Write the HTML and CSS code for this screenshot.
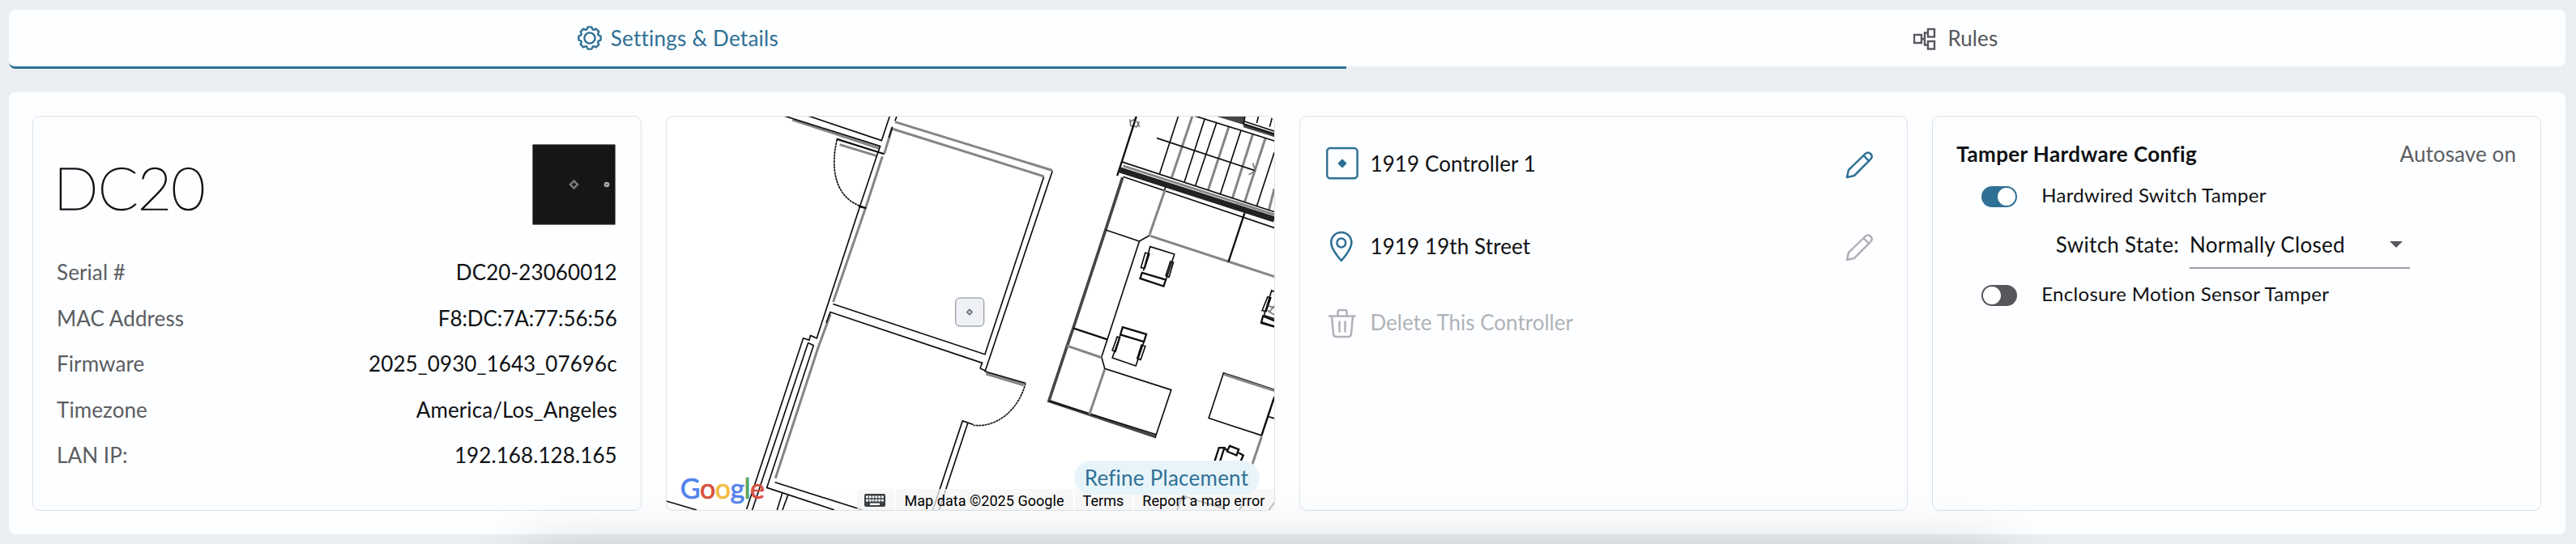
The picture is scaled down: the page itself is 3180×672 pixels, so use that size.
FILE: index.html
```html
<!DOCTYPE html>
<html lang="en">
<head>
    <meta charset="UTF-8">
    <meta name="viewport" content="width=device-width, initial-scale=1.0">
    <title>1919 Controller 1</title>
    <link rel="stylesheet" href="styles.css">
</head>
<body>
    <div class="tabs">
        <div class="tab active">
            <svg class="tab-icon" width="32" height="32" viewBox="-16 -16 32 32">
                <path d="M-2.4-13.6H2.4L3.6-10.7 5-10.1 7.9-11.3 11.3-7.9 10.1-5 10.7-3.6 13.6-2.4V2.4L10.7 3.6 10.1 5 11.3 7.9 7.9 11.3 5 10.1 3.6 10.7 2.4 13.6H-2.4L-3.6 10.7-5 10.1-7.9 11.3-11.3 7.9-10.1 5-10.7 3.6-13.6 2.4V-2.4L-10.7-3.6-10.1-5-11.3-7.9-7.9-11.3-5-10.1-3.6-10.7Z"/>
                <circle r="6.6"/>
            </svg>
            <span>Settings &amp; Details</span>
        </div>
        <div class="tab">
            <svg class="tab-icon rules-icon" width="28" height="28" viewBox="0 0 28 28">
                <rect x="1" y="9" width="9" height="10"/>
                <rect x="18" y="2" width="8" height="9.5"/>
                <rect x="18" y="17" width="8" height="9.5"/>
                <path d="M10 14h4M18 6.5h-4v15h4"/>
            </svg>
            <span>Rules</span>
        </div>
    </div>

    <div class="panel">
        <div class="card device">
            <div class="device-header">
                <h1>DC20</h1>
                <svg width="103" height="100" viewBox="0 0 103 100">
                    <rect x=".5" y=".5" width="102" height="99" rx="1" fill="#161616" stroke="#777"/>
                    <path d="M51.5 45.5l4.5 4.5-4.5 4.500-4.500-4.500z" fill="none" stroke="#77787a" stroke-width="2.600"/>
                    <circle cx="92" cy="50" r="3.300" fill="#aaa"/>
                    <circle cx="92" cy="50" r=".9" fill="#444"/>
                </svg>
            </div>
            <div class="detail"><span class="label">Serial #</span><span>DC20-23060012</span></div>
            <div class="detail"><span class="label">MAC Address</span><span class="mac">F8:DC:7A:77:56:56</span></div>
            <div class="detail"><span class="label">Firmware</span><span>2025_0930_1643_07696c</span></div>
            <div class="detail"><span class="label">Timezone</span><span>America/Los_Angeles</span></div>
            <div class="detail"><span class="label">LAN IP:</span><span>192.168.128.165</span></div>
        </div>

        <div class="card map">
            <svg class="floorplan" viewBox="39 42 2250 1461" preserveAspectRatio="none">
                <defs>
                    <filter id="soft" x="-5%" y="-5%" width="110%" height="110%"><feGaussianBlur stdDeviation="1.4"/></filter>
                </defs>
                <g filter="url(#soft)">
                    <!-- rooms -->
                    <path class="shade" d="M505 54L826 160M680 146L818 188M875 82L845 180M885 62L1468 242M876 88L1436 264M838 190L778 375L656 730M646 775L600 900L442 1385"/>
                    <path class="line" d="M470 38L830 152L820 180L755 375L595 865L572 855L567 872L545 865L335 1500M560 38L835 131L866 38"/>
                    <path class="line" d="M892 38L885 58M1468 244L1218 990M875 80L862 120M1436 266L1218 925L655 738M1200 977L1208 957L645 768L630 808M1200 977L1218 985"/>
                    <path class="line" d="M563 882L583 892L410 1420L660 1503M563 882L356 1503M440 1400L765 1503M468 1438L448 1503M488 1448L468 1503M38 1470L150 1503"/>
                    <path class="line" d="M1175 1186L1135 1172L1025 1503M1155 1178L1048 1503"/>
                    <!-- doors -->
                    <path class="line thick" d="M668 125L845 181M750 375L778 382"/>
                    <path class="line arc" d="M670 128C645 230 660 350 770 378"/>
                    <path class="shade thick" d="M1222 996L1362 1038"/>
                    <path class="line" d="M1218 988L1368 1032"/>
                    <path class="line arc" d="M1368 1032C1345 1130 1260 1200 1175 1188"/>
                </g>
                <g filter="url(#soft)" transform="translate(1140 0)">
                    <!-- stairs -->
                    <path class="line" d="M795 38L725 255M893 48L817 285M937 62L858 298M1027 92L950 330M1150 175L1085 375M1070 108L1045 190M1117 122L1100 180"/>
                    <path class="shade" d="M847 38L770 268M982 78L905 315M1070 108L995 345M1117 122L1040 360M1150 310L1130 390"/>
                    <path fill="#444" d="M925 38H1042L1036 72ZM1036 66L1150 102V118L1036 82Z"/>
                    <path class="line" d="M850 38L1150 132M1042 38L1036 70L1150 108M1092 38L1085 66M1142 45L1133 80M1040 60L1150 96"/>
                    <path class="line" d="M715 122L1080 243"/>
                    <path class="sketch" d="M1070 215L1080 243L1055 258M615 52L618 76L640 80M618 60L636 50M640 58L651 80M650 60L640 82"/>
                    <path class="line thick" d="M640 38L585 210L568 262"/>
                    <path class="shade" d="M590 225L1150 406"/>
                    <path class="line" d="M585 210L1150 396M590 265L1150 455"/>
                    <path class="band" d="M578 240L1150 424"/>
                    <!-- desks -->
                    <path class="wall" d="M588 268L525 463L405 828L382 895L315 1098L708 1230"/>
                    <path class="line" d="M525 463L650 505L532 868L510 935L522 978L768 1057L708 1236M650 505L688 483M740 322L748 302M315 1098L710 1222"/>
                    <path class="shade" d="M745 315L688 480M690 485L1150 636M382 893L510 937M522 980L465 1148"/>
                    <path class="line thick" d="M1040 400L980 582M405 828L532 870M1100 808L1150 822"/>
                    <path class="line" d="M1150 1056L962 994L907 1162L1103 1226L1150 1082M1125 1155L1150 1163"/>
                    <path class="shade" d="M965 1000L1150 1060M1103 1230L1068 1335"/>
                    <path class="line thick" d="M1148 1090L1103 1226"/>
                    <!-- chairs -->
                    <path class="line" d="M665 615L690 525L780 553L748 650M672 548L687 552L670 605L656 603ZM765 580L776 583L760 638L748 633Z"/>
                    <path class="line thick" d="M660 622L748 648L740 672L653 643Z"/>
                    <path class="line thick" d="M588 824L676 850L667 878L580 852Z"/>
                    <path class="line" d="M580 852L550 938L637 968L667 878M568 860L578 863L562 915L550 910ZM658 890L672 895L655 945L642 940Z"/>
                    <path class="line" d="M1150 692L1140 688L1112 780L1150 793M1125 712L1137 715L1120 765L1105 762Z"/>
                    <path class="line thick" d="M1150 800L1108 783L1102 806L1150 822"/>
                    <path class="sketch" d="M1128 745L1150 752M1130 770L1150 745M1125 762L1150 778"/>
                    <path class="line thick" d="M928 1325L945 1272L965 1272L948 1325M1018 1290L1035 1300L1022 1330M965 1275L975 1280"/>
                    <path class="line thick" d="M975 1285L985 1265L1018 1278L1010 1300Z"/>
                    <path class="line" d="M810 1450L790 1503M810 1450L970 1500M1035 1480L1020 1503M1150 1475L1130 1503"/>
                </g>
                <rect x="1109.5" y="715.5" width="105" height="105" rx="16" fill="#f0f1f6" stroke="#7a828c" stroke-width="3"/>
                <path d="M1161 759l9 9-9 9-9-9z" fill="none" stroke="#6f7a80" stroke-width="6" stroke-linejoin="round"/>
            </svg>
            <div class="google"><span class="g-blue">G</span><span class="g-red">o</span><span class="g-yellow">o</span><span class="g-blue">g</span><span class="g-green">l</span><span class="g-red">e</span></div>
            <div class="attribution">
                <div class="chip keyboard">
                    <svg width="26" height="16" viewBox="0 0 26 16">
                        <rect width="26" height="16" rx="2" fill="#3c4043"/>
                        <path d="M2 3.800h22M2 8.200h22" stroke="#fff" stroke-width="2.800" stroke-dasharray="2.800 1"/>
                        <path d="M7 12.800h12" stroke="#fff" stroke-width="2.400"/>
                    </svg>
                </div>
                <div class="chip">Map data ©2025 Google</div>
                <div class="chip">Terms</div>
                <div class="chip">Report a map error</div>
            </div>
            <div class="refine">Refine Placement</div>
        </div>

        <div class="card actions">
            <div class="action">
                <svg class="icon" width="40" height="42" viewBox="0 0 40 42">
                    <rect x="1.200" y="2" width="37.400" height="37.200" rx="4"/>
                    <path class="dot" d="M20 16.800l4 4-4 4-4-4z"/>
                </svg>
                <span>1919 Controller 1</span>
                <svg class="icon pencil" width="34" height="34" viewBox="0 0 34 34">
                    <path d="M2 32L4 23 24.500 3.200Q28-.2 31.200 3T31 9.800L11 30ZM22.500 5.200L29 11.600"/>
                </svg>
            </div>
            <div class="action">
                <svg class="icon" width="40" height="42" viewBox="0 0 40 42">
                    <path d="M18.800 39C14 33.500 6.200 24.500 6.200 16.500a12.600 12.600 0 0 1 25.200 0C31.400 24.500 23.600 33.500 18.800 39Z"/>
                    <circle cx="18.800" cy="17" r="5.400"/>
                </svg>
                <span>1919 19th Street</span>
                <svg class="icon pencil muted" width="34" height="34" viewBox="0 0 34 34">
                    <path d="M2 32L4 23 24.500 3.200Q28-.2 31.200 3T31 9.800L11 30ZM22.500 5.200L29 11.600"/>
                </svg>
            </div>
            <div class="action muted">
                <svg class="icon" width="40" height="42" viewBox="0 0 40 42">
                    <path d="M4 13.500H35.500M7 14L9 35.500Q9.300 39 12.500 39H27.500Q30.700 39 31 35.500L33 14M14.500 13V8.500Q14.500 6 17 6H23Q25.500 6 25.500 8.500V13M16.500 20.500V32.500M23.500 20.500V32.500"/>
                </svg>
                <span>Delete This Controller</span>
            </div>
        </div>

        <div class="card tamper">
            <div class="tamper-header">
                <h2>Tamper Hardware Config</h2>
                <span class="label">Autosave on</span>
            </div>
            <div class="switch-row">
                <div class="toggle on"></div>
                <span>Hardwired Switch Tamper</span>
            </div>
            <div class="state-row">
                <span>Switch State:</span>
                <div class="select">Normally Closed</div>
            </div>
            <div class="switch-row">
                <div class="toggle"></div>
                <span>Enclosure Motion Sensor Tamper</span>
            </div>
        </div>
    </div>
    <div class="drawer-shadow"></div>
</body>
</html>
```
FILE: styles.css
```css
* {
    box-sizing: border-box;
}
body {
    font-family: Lato, sans-serif;
    font-size: 26px;
    line-height: 32px;
    letter-spacing: 0.1px;
    margin: 0;
    padding: 12px 13px 0 11px;
    height: 672px;
    overflow: hidden;
    background-color: #ebeff2;
    color: #101114;
}
h1, h2 {
    margin: 0;
}
svg {
    flex: none;
}
.tabs {
    display: flex;
    height: 73px;
}
.tab {
    flex: 1 1 auto;
    display: flex;
    align-items: center;
    justify-content: center;
    gap: 10px;
    height: 70px;
    background-color: #fdfeff;
    color: #55575c;
    border-radius: 0 8px 8px 0;
}
.tab.active {
    height: 73px;
    color: #2f7095;
    border-bottom: 3px solid #2f7095;
    border-radius: 8px 0 0 8px;
    letter-spacing: 0.25px;
}
.tab-icon {
    fill: none;
    stroke: currentColor;
    stroke-width: 2.4;
    stroke-linejoin: round;
}
.rules-icon {
    margin: 2px 4px 0 0;
    stroke-linejoin: miter;
}
.panel {
    display: grid;
    grid-template-columns: repeat(4, 1fr);
    gap: 30px;
    height: 546px;
    margin-top: 29px;
    padding: 29px 30px 29px 29px;
    border-radius: 8px;
    background-color: #fdfeff;
}
.card {
    border: 1px solid #dde1e6;
    border-radius: 9px;
    padding: 0 29px;
}
.label {
    color: #5b5d62;
}

/* device details */
.device-header {
    display: flex;
    justify-content: space-between;
    height: 100px;
    margin: 34px 2px 42px 0;
}
h1 {
    font-size: 73px;
    line-height: 86px;
    font-weight: 100;
    letter-spacing: -0.8px;
    margin: 10px 0 0 -4px;
    -webkit-text-stroke: 1.5px #101114;
}
.detail {
    display: flex;
    justify-content: space-between;
    margin-bottom: 24.6px;
}
.mac {
    letter-spacing: -0.1px;
}

/* map */
.map {
    position: relative;
    padding: 0;
    overflow: hidden;
    background-color: #fff;
}
.floorplan {
    display: block;
    width: 100%;
    height: 100%;
}
.line {
    fill: none;
    stroke: #111;
    stroke-width: 5;
}
.line.thick {
    stroke-width: 7;
}
.arc {
    stroke-dasharray: 9 2;
}
.shade {
    fill: none;
    stroke: #858585;
    stroke-width: 9;
}
.shade.thick {
    stroke-width: 12;
}
.band {
    fill: none;
    stroke: #222;
    stroke-width: 22;
}
.wall {
    fill: none;
    stroke: #444;
    stroke-width: 11;
}
.sketch {
    fill: none;
    stroke: #777;
    stroke-width: 5;
}
.google {
    position: absolute;
    left: 17px;
    bottom: 7px;
    font-size: 34px;
    line-height: 40px;
    letter-spacing: -0.5px;
    -webkit-text-stroke: 0.7px;
}
.g-blue {
    color: #5383ec;
}
.g-red {
    color: #d95140;
}
.g-yellow {
    color: #f2bd42;
}
.g-green {
    color: #58a55c;
}
.attribution {
    position: absolute;
    right: 0;
    bottom: 0;
    display: flex;
    gap: 2px;
    font-family: Roboto, sans-serif;
    font-size: 18px;
    line-height: 29px;
    letter-spacing: 0.05px;
    color: #000;
}
.chip {
    height: 26px;
    padding: 0 11px 0 10px;
    background-color: rgba(245, 245, 245, 0.75);
}
.keyboard {
    padding: 6px 11px 0 9px;
    line-height: 0;
}
.refine {
    position: absolute;
    right: 18px;
    bottom: 19px;
    width: 229px;
    height: 42px;
    line-height: 43px;
    text-align: center;
    border-radius: 21px;
    background-color: #e7f4fa;
    color: #2f7095;
    letter-spacing: 0.25px;
}

/* controller actions */
.actions {
    padding: 38px 42px 0 32px;
}
.action {
    display: flex;
    align-items: center;
    gap: 15px;
    height: 40px;
    margin-bottom: 62px;
}
.action.muted {
    margin-top: -8px;
    color: #b0b2b8;
    letter-spacing: 0;
}
.icon {
    fill: none;
    stroke: #2f7095;
    stroke-width: 2.5;
    stroke-linecap: round;
    stroke-linejoin: round;
}
.dot {
    fill: #2f7095;
}
.muted .icon, .icon.muted {
    stroke: #b0b2b8;
}
.pencil {
    margin: 3px 0 0 auto;
}

/* tamper config */
.tamper-header {
    display: flex;
    justify-content: space-between;
    margin: 30px 1px 20px 0;
}
h2 {
    font-size: 26px;
    line-height: 32px;
    font-weight: 700;
    letter-spacing: 0.4px;
}
.switch-row {
    display: flex;
    gap: 30px;
    padding-left: 31px;
    font-size: 24px;
    line-height: 30px;
    letter-spacing: 0.3px;
}
.toggle {
    width: 44px;
    height: 26px;
    margin-top: 4px;
    padding: 2px;
    border-radius: 13px;
    background-color: #55575c;
}
.toggle::before {
    content: "";
    display: block;
    width: 22px;
    height: 22px;
    border-radius: 50%;
    background-color: #fff;
}
.toggle.on {
    background-color: #2f7095;
}
.toggle.on::before {
    margin-left: auto;
}
.state-row {
    display: flex;
    align-items: baseline;
    justify-content: flex-end;
    margin: 30px 132px 16px 0;
    letter-spacing: 0.3px;
    gap: 13px;
}
.select {
    display: flex;
    align-items: center;
    justify-content: space-between;
    width: 272px;
    height: 46px;
    padding-right: 9px;
    padding-bottom: 12px;
    border-bottom: 2px solid #9b9da2;
}
.select::after {
    content: "";
    border: 8px solid transparent;
    border-top: 8px solid #55575c;
    border-bottom: 0;
}

/* shadow of the drawer that sits below the fold */
.drawer-shadow {
    position: fixed;
    left: 650px;
    right: 710px;
    top: 692px;
    height: 100px;
    box-shadow: 0 0 80px rgba(0, 0, 0, 0.25);
}
```
